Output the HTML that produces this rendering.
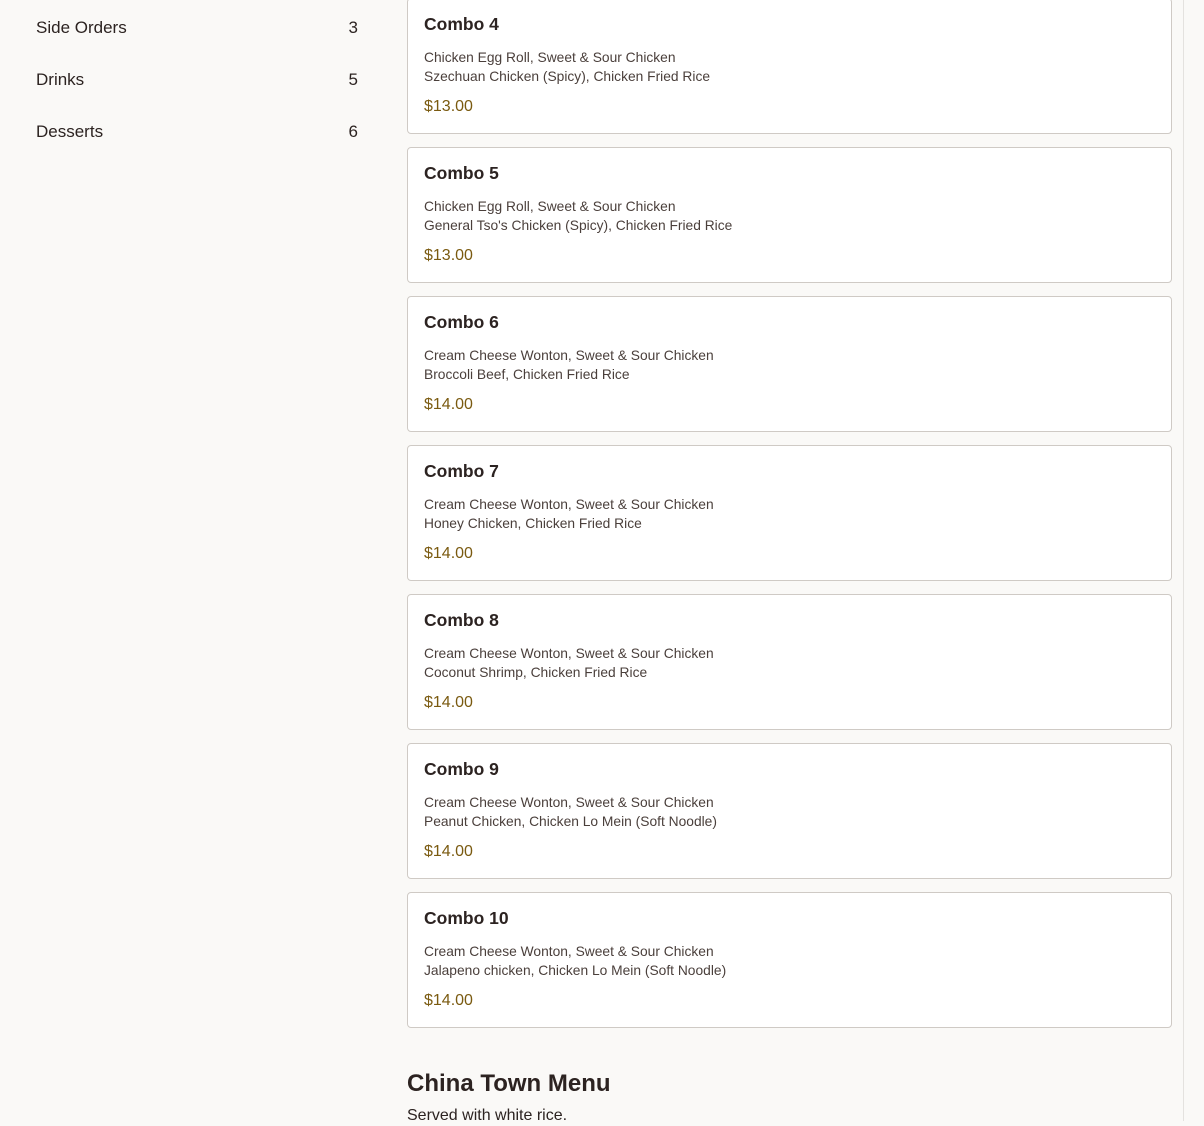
<!DOCTYPE html><html><head><style>
body{margin:0;width:1204px;height:1121px;overflow:hidden;background:#faf9f7;font-family:"Liberation Sans",sans-serif;color:#2c2321;position:relative}
.side{position:absolute;left:36px;width:322px;font-size:17px}
.side div{position:absolute;left:0;width:322px;display:flex;justify-content:space-between;line-height:20px}
.card{position:absolute;left:407px;width:763px;height:134px;background:#fff;border:1px solid #cfcac5;border-radius:4px;box-sizing:content-box}
.card h3{position:absolute;left:16px;top:14px;margin:0;font-size:17.5px;font-weight:bold;line-height:22px}
.card p{position:absolute;left:16px;top:49px;margin:0;font-size:13.8px;line-height:19px;color:#4a3f3b}
.card .pr{position:absolute;left:16px;top:98px;font-size:16px;color:#7a5a10;line-height:20px}
.vl{position:absolute;left:1183px;top:0;width:1px;height:1121px;background:#e4e2df}
</style></head><body>
<div class="side">
<div style="top:18px"><span>Side Orders</span><span>3</span></div>
<div style="top:70px"><span>Drinks</span><span>5</span></div>
<div style="top:122px"><span>Desserts</span><span>6</span></div>
</div>
<div class="card" style="top:-2px"><h3>Combo 4</h3><p>Chicken Egg Roll, Sweet &amp; Sour Chicken<br>Szechuan Chicken (Spicy), Chicken Fried Rice</p><div class="pr">$13.00</div></div>
<div class="card" style="top:147px"><h3>Combo 5</h3><p>Chicken Egg Roll, Sweet &amp; Sour Chicken<br>General Tso's Chicken (Spicy), Chicken Fried Rice</p><div class="pr">$13.00</div></div>
<div class="card" style="top:296px"><h3>Combo 6</h3><p>Cream Cheese Wonton, Sweet &amp; Sour Chicken<br>Broccoli Beef, Chicken Fried Rice</p><div class="pr">$14.00</div></div>
<div class="card" style="top:445px"><h3>Combo 7</h3><p>Cream Cheese Wonton, Sweet &amp; Sour Chicken<br>Honey Chicken, Chicken Fried Rice</p><div class="pr">$14.00</div></div>
<div class="card" style="top:594px"><h3>Combo 8</h3><p>Cream Cheese Wonton, Sweet &amp; Sour Chicken<br>Coconut Shrimp, Chicken Fried Rice</p><div class="pr">$14.00</div></div>
<div class="card" style="top:743px"><h3>Combo 9</h3><p>Cream Cheese Wonton, Sweet &amp; Sour Chicken<br>Peanut Chicken, Chicken Lo Mein (Soft Noodle)</p><div class="pr">$14.00</div></div>
<div class="card" style="top:892px"><h3>Combo 10</h3><p>Cream Cheese Wonton, Sweet &amp; Sour Chicken<br>Jalapeno chicken, Chicken Lo Mein (Soft Noodle)</p><div class="pr">$14.00</div></div>
<div style="position:absolute;left:407px;top:1069px;font-size:24px;font-weight:bold;line-height:30px">China Town Menu</div>
<div style="position:absolute;left:407px;top:1106px;font-size:16px;line-height:20px">Served with white rice.</div>
<div class="vl"></div>
</body></html>
